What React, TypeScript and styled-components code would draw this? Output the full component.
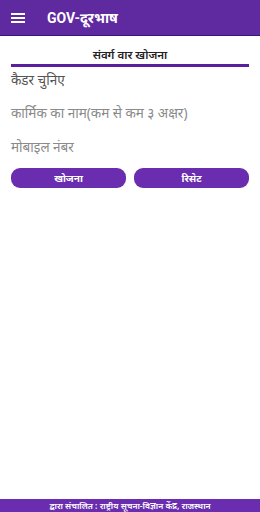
import React from "react";
import styled, { createGlobalStyle } from "styled-components";

const Global = createGlobalStyle`
  html, body { margin: 0; padding: 0; background: #fff; }
  body { font-family: "Noto Sans", Roboto, sans-serif; }
  #root { height: 512px; }
`;

const Page = styled.div`
  width: 260px;
  height: 512px;
  display: flex;
  flex-direction: column;
  background: #fff;
`;

const AppBar = styled.header`
  height: 36px;
  background: #5f2a9f;
  border-bottom: 1px solid #3f1675;
  box-sizing: border-box;
  display: flex;
  align-items: center;
  padding-left: 11px;
  gap: 22px;
  color: #fff;
`;

const Title = styled.div`
  font-family: Roboto, "Noto Sans", sans-serif;
  font-weight: 700;
  font-size: 14px;
`;

const Content = styled.main`
  flex: 1;
  display: flex;
  flex-direction: column;
  padding: 0 11px;
`;

const SectionTitle = styled.div`
  margin-top: 10px;
  text-align: center;
  font-weight: 600;
  font-size: 11.5px;
  line-height: 17px;
  color: #222;
  padding-bottom: 1px;
  border-bottom: 3px solid #5a1f9e;
`;

const Field = styled.div<{ $dark?: boolean; $top: number }>`
  margin-top: ${(p) => p.$top}px;
  font-size: 13.5px;
  line-height: 20px;
  color: ${(p) => (p.$dark ? "#555" : "#8a8a8a")};
`;

const Buttons = styled.div`
  margin-top: 11px;
  display: grid;
  grid-template-columns: 1fr 1fr;
  gap: 8px;
`;

const Button = styled.button`
  height: 20px;
  border: none;
  border-radius: 9px;
  background: #6a2db0;
  color: #fff;
  font-family: "Noto Sans", sans-serif;
  font-weight: 700;
  font-size: 10px;
  padding: 0;
`;

const Footer = styled.footer`
  height: 13px;
  background: #6a2db0;
  color: #fff;
  font-size: 8.5px;
  line-height: 13px;
  text-align: center;
  font-weight: 600;
`;

const Menu = () => (
  <svg width="14" height="12" viewBox="0 0 14 12">
    <rect x="0" y="1" width="14" height="2" fill="#fff" />
    <rect x="0" y="5" width="14" height="2" fill="#fff" />
    <rect x="0" y="9" width="14" height="2" fill="#fff" />
  </svg>
);

export default function App() {
  return (
    <Page>
      <Global />
      <AppBar>
        <Menu />
        <Title>GOV-दूरभाष</Title>
      </AppBar>
      <Content>
        <SectionTitle>संवर्ग वार खोजना</SectionTitle>
        <Field $dark $top={3}>कैडर चुनिए</Field>
        <Field $top={13}>कार्मिक का नाम(कम से कम ३ अक्षर)</Field>
        <Field $top={14}>मोबाइल नंबर</Field>
        <Buttons>
          <Button>खोजना</Button>
          <Button>रिसेट</Button>
        </Buttons>
      </Content>
      <Footer>द्वारा संचालित : राष्ट्रीय सूचना-विज्ञान केंद्र, राजस्थान</Footer>
    </Page>
  );
}
